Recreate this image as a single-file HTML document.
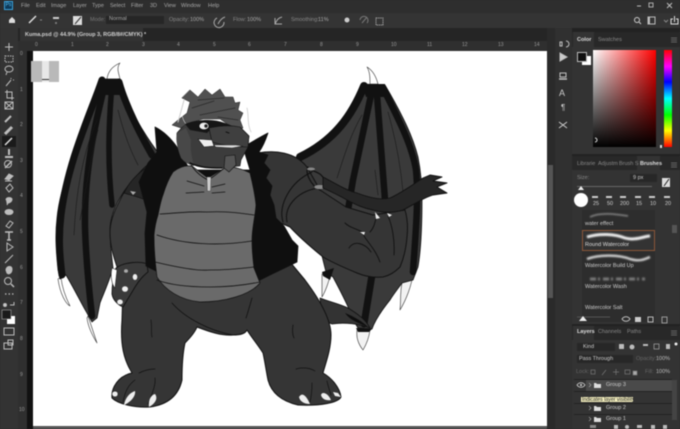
<!DOCTYPE html>
<html><head><meta charset="utf-8"><style>
html,body{margin:0;padding:0;background:#2b2b2b}
#r{position:relative;width:680px;height:429px;overflow:hidden;background:#2f2f2f;font-family:"Liberation Sans",sans-serif;color:#a8a8a8;font-size:5.5px;filter:blur(.4px)}
#r div{position:absolute}
#r span{position:absolute;white-space:nowrap;line-height:7px}
svg{position:absolute;left:0;top:0}
</style></head><body><div id="r">
<div style="left:0;top:0;width:680px;height:13px;background:#2e2e2e"></div>
<div style="left:0;top:13px;width:680px;height:15px;background:#343434"></div>
<div style="left:0;top:28px;width:547px;height:13px;background:#252525"></div>
<div style="left:20px;top:28px;width:123px;height:13px;background:#333"></div>
<div style="left:0;top:28px;width:18px;height:401px;background:#333"></div>
<div style="left:18px;top:41px;width:529px;height:10px;background:#2f2f2f"></div>
<div style="left:18px;top:41px;width:9px;height:388px;background:#2f2f2f"></div>
<div style="left:27px;top:51px;width:6px;height:378px;background:#111"></div>
<div style="left:33px;top:51px;width:514px;height:375px;background:#fff"></div>
<div style="left:33px;top:426px;width:514px;height:3px;background:#555"></div>
<div style="left:547px;top:28px;width:8px;height:401px;background:#2a2a2a"></div>
<div style="left:548px;top:165px;width:5px;height:133px;background:#555"></div>
<div style="left:555px;top:28px;width:17px;height:401px;background:#303030"></div>
<div style="left:572px;top:28px;width:108px;height:401px;background:#222"></div>
<div style="left:572px;top:32px;width:108px;height:122px;background:#333"></div>
<div style="left:572px;top:32px;width:108px;height:15px;background:#282828"></div>
<div style="left:573px;top:32px;width:21px;height:15px;background:#333"></div>
<div style="left:572px;top:156px;width:108px;height:168px;background:#333"></div>
<div style="left:572px;top:156px;width:108px;height:14px;background:#282828"></div>
<div style="left:637px;top:156px;width:23px;height:14px;background:#333"></div>
<div style="left:572px;top:326px;width:108px;height:103px;background:#333"></div>
<div style="left:572px;top:326px;width:108px;height:14px;background:#282828"></div>
<div style="left:573px;top:326px;width:21px;height:14px;background:#333"></div>

<!-- menus -->
<div style="left:4px;top:1px;width:9px;height:9px;background:#0d3a5a;border:1px solid #3aa0d8;box-sizing:border-box;color:#5cc0f0;font-size:5px;line-height:7px;text-align:center">Ps</div>
<span style="left:21px;top:3px">File</span><span style="left:36px;top:3px">Edit</span><span style="left:51px;top:3px">Image</span><span style="left:73px;top:3px">Layer</span><span style="left:92px;top:3px">Type</span><span style="left:110px;top:3px">Select</span><span style="left:131px;top:3px">Filter</span><span style="left:150px;top:3px">3D</span><span style="left:164px;top:3px">View</span><span style="left:181px;top:3px">Window</span><span style="left:208px;top:3px">Help</span>
<span style="left:90px;top:17px;color:#777">Mode:</span>
<div style="left:106px;top:16px;width:58px;height:8px;background:#262626"></div>
<span style="left:109px;top:16px">Normal</span>
<span style="left:169px;top:17px;color:#888">Opacity:</span><span style="left:190px;top:17px">100%</span>
<span style="left:233px;top:17px;color:#888">Flow:</span><span style="left:247px;top:17px">100%</span>
<span style="left:291px;top:17px;color:#888">Smoothing:</span><span style="left:318px;top:17px">11%</span>
<span style="left:25px;top:32px;color:#d0d0d0;font-weight:bold">Kuma.psd @ 44.9% (Group 3, RGB/8#/CMYK) *</span>
<span style="left:35px;top:42px;color:#999;font-size:5px">0</span><span style="left:71px;top:42px;color:#999;font-size:5px">1</span><span style="left:106px;top:42px;color:#999;font-size:5px">2</span><span style="left:142px;top:42px;color:#999;font-size:5px">3</span><span style="left:177px;top:42px;color:#999;font-size:5px">4</span><span style="left:213px;top:42px;color:#999;font-size:5px">5</span><span style="left:248px;top:42px;color:#999;font-size:5px">6</span><span style="left:284px;top:42px;color:#999;font-size:5px">7</span><span style="left:320px;top:42px;color:#999;font-size:5px">8</span><span style="left:356px;top:42px;color:#999;font-size:5px">9</span><span style="left:391px;top:42px;color:#999;font-size:5px">10</span><span style="left:427px;top:42px;color:#999;font-size:5px">11</span><span style="left:462px;top:42px;color:#999;font-size:5px">12</span><span style="left:498px;top:42px;color:#999;font-size:5px">13</span><span style="left:534px;top:42px;color:#999;font-size:5px">14</span>
<span style="left:20px;top:51px;color:#999;font-size:5px">0</span><span style="left:20px;top:87px;color:#999;font-size:5px">1</span><span style="left:20px;top:122px;color:#999;font-size:5px">2</span><span style="left:20px;top:158px;color:#999;font-size:5px">3</span><span style="left:20px;top:193px;color:#999;font-size:5px">4</span><span style="left:20px;top:229px;color:#999;font-size:5px">5</span><span style="left:20px;top:265px;color:#999;font-size:5px">6</span><span style="left:20px;top:300px;color:#999;font-size:5px">7</span><span style="left:20px;top:336px;color:#999;font-size:5px">8</span><span style="left:20px;top:372px;color:#999;font-size:5px">9</span><span style="left:19px;top:407px;color:#999;font-size:5px">10</span>

<!-- color panel -->
<span style="left:577px;top:37px;color:#ddd;font-weight:bold">Color</span><span style="left:598px;top:37px;color:#888">Swatches</span>
<div style="left:593px;top:50px;width:63px;height:97px;background:linear-gradient(to top,#000,rgba(0,0,0,0)),linear-gradient(to right,#fff,#f00)"></div>
<div style="left:664px;top:50px;width:8px;height:97px;background:linear-gradient(to bottom,#f00,#f0f 17%,#00f 33%,#0ff 50%,#0f0 67%,#ff0 83%,#f00)"></div>
<div style="left:582px;top:56px;width:9px;height:9px;background:#fff"></div>
<div style="left:577px;top:52px;width:8px;height:8px;background:#111;border:.5px solid #bbb"></div>

<!-- brushes panel -->
<span style="left:577px;top:161px;color:#888">Librarie</span><span style="left:598px;top:161px;color:#888">Adjustm</span><span style="left:619px;top:161px;color:#888">Brush S</span><span style="left:640px;top:161px;color:#ddd;font-weight:bold">Brushes</span>
<span style="left:577px;top:175px;color:#888">Size:</span>
<div style="left:630px;top:174px;width:27px;height:8px;background:#272727"></div><span style="left:633px;top:175px;color:#ccc">9 px</span>
<div style="left:662px;top:178px;width:8px;height:9px;background:#ddd"></div>
<div style="left:577px;top:186px;width:75px;height:1px;background:#666"></div>
<div style="left:574px;top:193px;width:14px;height:14px;border-radius:50%;background:#fff"></div>
<span style="left:593px;top:201px;color:#ccc">25</span><span style="left:607px;top:201px;color:#ccc">50</span><span style="left:620px;top:201px;color:#ccc">200</span><span style="left:636px;top:201px;color:#ccc">15</span><span style="left:650px;top:201px;color:#ccc">10</span><span style="left:665px;top:201px;color:#ccc">20</span>
<div style="left:582px;top:210px;width:73px;height:112px;background:#2d2d2d"></div>
<div style="left:582px;top:230px;width:73px;height:21px;border:1px solid #8a5638;box-sizing:border-box;background:#333"></div>
<span style="left:585px;top:221px;color:#ccc">water effect</span>
<span style="left:585px;top:242px;color:#ddd">Round Watercolor</span>
<span style="left:585px;top:263px;color:#ccc">Watercolor Build Up</span>
<span style="left:585px;top:284px;color:#ccc">Watercolor Wash</span>
<span style="left:585px;top:305px;color:#ccc">Watercolor Salt</span>
<div style="left:672px;top:225px;width:5px;height:8px;background:#555"></div>

<!-- layers panel -->
<span style="left:577px;top:329px;color:#ddd;font-weight:bold">Layers</span><span style="left:598px;top:329px;color:#888">Channels</span><span style="left:627px;top:329px;color:#888">Paths</span>
<div style="left:577px;top:343px;width:38px;height:8px;background:#272727"></div><span style="left:583px;top:344px;color:#ccc">Kind</span>
<div style="left:577px;top:355px;width:56px;height:8px;background:#272727"></div><span style="left:579px;top:356px;color:#ccc">Pass Through</span>
<span style="left:636px;top:356px;color:#666">Opacity:</span><span style="left:656px;top:356px;color:#bbb">100%</span>
<span style="left:576px;top:369px;color:#666">Lock:</span><span style="left:645px;top:369px;color:#666">Fill:</span><span style="left:656px;top:369px;color:#bbb">100%</span>
<div style="left:574px;top:379px;width:98px;height:1px;background:#222"></div>
<div style="left:586px;top:380px;width:86px;height:11px;background:#4a4a4a"></div>
<div style="left:574px;top:391px;width:98px;height:1px;background:#222"></div>
<div style="left:574px;top:403px;width:98px;height:1px;background:#222"></div>
<div style="left:574px;top:414px;width:98px;height:1px;background:#222"></div>
<span style="left:606px;top:382px;color:#ccc">Group 3</span><span style="left:606px;top:405px;color:#ccc">Group 2</span><span style="left:606px;top:416px;color:#ccc">Group 1</span>
<div style="left:672px;top:380px;width:5px;height:40px;background:#444"></div>

<svg width="680" height="429" viewBox="0 0 680 429">
<defs><filter id="s"><feGaussianBlur stdDeviation=".7"/></filter></defs>
<g stroke-linejoin="round" stroke-linecap="round">
<rect x="31" y="61" width="28" height="21" fill="#b9b9b9"/><rect x="42" y="61" width="7" height="21" fill="#e8e8e8"/><rect x="42" y="79" width="7" height="1" fill="#333"/>
<!-- left wing claws -->
<path d="M107 79C108 71 113 66 120 63C116 68 119 74 120 79" fill="#fff" stroke="#333" stroke-width=".6"/>
<path d="M61 277C62 288 66 298 70 306C66 304 60 294 58 279Z" fill="#fff" stroke="#333" stroke-width=".6"/>
<path d="M88 316L97 343C92 335 88 326 87 318Z" fill="#fff" stroke="#333" stroke-width=".6"/>
<!-- left wing -->
<path d="M102 79L120 79C123 85 122 92 126 100C135 118 148 140 160 155L145 168C125 185 110 210 110 230C110 245 112 258 113 268C108 285 102 297 100 303L97 318L92 322L87 313C82 305 75 290 66 275L60 279L58 270C56 250 55 235 57 218C60 185 80 135 96 105Z" fill="#3a3a3a" stroke="#111" stroke-width=".8"/>
<path d="M102 80C92 110 68 160 61 215C58 240 60 258 62 275" fill="none" stroke="#111" stroke-width="7"/>
<path d="M119 82C124 100 135 125 152 155" fill="none" stroke="#111" stroke-width="7"/>
<path d="M105 84C96 120 84 170 85 227C86 260 89 290 92 316" fill="none" stroke="#111" stroke-width="6.500"/>
<path d="M112 84C109 120 107 160 112 205" fill="none" stroke="#111" stroke-width="5.500"/>
<rect x="101" y="79" width="20" height="16" fill="#111"/>
<g fill="none" stroke="#1a1a1a" stroke-width=".6"><path d="M97 120C84 150 76 190 74 235"/><path d="M118 110C123 130 130 150 138 165"/><path d="M98 130C92 150 86 190 80 220"/></g>
<!-- right wing claws -->
<path d="M367 67C372 70 376 76 378 84L370 84C370 78 370 72 367 67Z" fill="#fff" stroke="#333" stroke-width=".6"/>
<path d="M402 283C404 280 410 277 413 273C412 285 406 300 400 310C401 300 400 292 402 283Z" fill="#f2f2f2" stroke="#333" stroke-width=".6"/>
<path d="M357 330L370 330C369 338 366 345 363 350C359 345 356 338 357 330Z" fill="#f2f2f2" stroke="#333" stroke-width=".6"/>
<path d="M322 274C322 282 322 290 322 297C325 292 329 282 330 275Z" fill="#f2f2f2" stroke="#333" stroke-width=".6"/>
<!-- right wing -->
<path d="M362 84L385 85C392 97 398 108 403 118C410 132 415 145 418 157C421 172 422 185 422 200C422 225 421 250 418 267L413 280L402 283C397 290 393 295 390 300C382 310 375 320 372 329L358 328L355 323C348 305 340 290 333 277L326 272L297 156C320 148 335 135 340 125C348 112 355 98 362 84Z" fill="#3a3a3a" stroke="#111" stroke-width=".8"/>
<path d="M364 86C352 115 335 140 300 157" fill="none" stroke="#111" stroke-width="8"/>
<path d="M383 88C398 118 412 145 416 170C419 200 415 240 413 272" fill="none" stroke="#111" stroke-width="6.500"/>
<path d="M371 95L353 180L347 216" fill="none" stroke="#111" stroke-width="6.500"/>
<path d="M377 95L385 200" fill="none" stroke="#111" stroke-width="6.500"/>
<path d="M372 275L364 324" fill="none" stroke="#111" stroke-width="7"/>
<path d="M362 84H385V97H366Z" fill="#111"/>
<path d="M322 272L334 268L330 280L323 276Z" fill="#111"/>
<path d="M356 328L372 329L369 332L358 332Z" fill="#111"/>
<g fill="none" stroke="#1a1a1a" stroke-width=".6"><path d="M362 115C350 135 343 160 337 178"/><path d="M388 112C396 140 401 170 403 192"/><path d="M375 170L378 195"/></g>
<!-- tail lower -->
<path d="M320 298C330 302 340 304 348 308C358 314 366 320 370 328C360 324 345 322 332 324L322 320Z" fill="#333" stroke="#111" stroke-width=".8"/>
<path d="M345 313C355 317 363 322 368 327C358 323 350 320 345 313Z" fill="#0f0f0f"/>
<!-- body/legs -->
<path d="M150 225C128 260 122 290 122 320C120 345 124 360 132 373C118 376 111 388 112 398C118 404 135 408 150 407C165 405 178 398 182 380C182 365 183 352 185 343C190 338 195 332 197 327C210 332 222 336 233 335C240 335 245 334 247 330C252 338 258 345 263 353C265 362 266 370 268 380C272 395 285 402 298 405C320 406 338 403 341 397C340 388 332 378 323 373C325 365 331 350 331 335C331 320 320 300 305 280L290 262L255 210L160 200Z" fill="#353535" stroke="#111" stroke-width="1"/>
<path d="M151 320C152 327 151 332 152 337" fill="none" stroke="#111" stroke-width=".7"/>
<path d="M293 325C292 332 293 336 294 338" fill="none" stroke="#111" stroke-width=".8"/>
<path d="M172 303C185 318 210 331 233 335M252 298C250 305 248 312 246 318" fill="none" stroke="#111" stroke-width=".8"/>
<path d="M139 373C145 370 150 369 155 369M296 369C303 367 310 368 315 371" fill="none" stroke="#111" stroke-width=".7"/>
<path d="M135 380C128 385 125 392 123 402M155 378C156 386 151 396 148 404M312 383C312 390 311 398 310 402M327 381C328 386 330 392 331 395" fill="none" stroke="#111" stroke-width=".7"/>
<!-- toes -->
<ellipse cx="115" cy="394" rx="3" ry="2.800" fill="#eee" stroke="#111" stroke-width=".4"/><path d="M124 405C125 399 129 393 135 391C136 396 131 402 124 405Z" fill="#eee"/><path d="M149 407C148 400 151 395 155 394C158 398 156 403 149 407Z" fill="#eee"/>
<path d="M299 397C302 392 306 395 310 404C305 404 300 402 299 397Z" fill="#eee"/><path d="M321 395C322 391 328 393 331 400C326 401 322 399 321 395Z" fill="#eee"/><path d="M333 392L338 393L341 397L335 396Z" fill="#eee"/>
<!-- left arm -->
<path d="M160 155C145 165 128 183 120 200C112 215 110 225 110 232C110 245 113 255 117 267L147 267L155 230L160 190Z" fill="#3a3a3a" stroke="#111" stroke-width=".9"/>
<path d="M124 193C130 180 140 172 146 168C150 175 152 190 150 202C143 198 130 195 124 193Z" fill="#262626" stroke="#111" stroke-width=".7"/>
<path d="M130 191L136 192L133 195Z" fill="#aaa"/>
<path d="M116 268C124 262 140 261 147 264L148 272C140 278 135 287 132 292L123 307C118 305 113 300 112 294C112 285 113 278 116 268Z" fill="#3a3a3a" stroke="#111" stroke-width=".9"/>
<path d="M112 268C110 276 112 285 115 288L117 270Z" fill="#fff" stroke="#222" stroke-width=".6"/>
<ellipse cx="135" cy="277" rx="2.300" ry="3" fill="#eee"/><ellipse cx="125" cy="289" rx="3" ry="2.800" fill="#eee"/><ellipse cx="120" cy="302" rx="2.800" ry="2.500" fill="#eee"/><ellipse cx="126" cy="271" rx="2" ry="1.800" fill="#aaa"/>
<!-- right arm -->
<path d="M258 153C275 150 295 152 307 167L320 190L346 207L373 215L405 210C408 220 408 228 407 237C406 250 403 260 400 267C394 273 388 276 383 277C372 278 364 276 357 273C345 268 333 263 323 257C312 248 300 238 290 227L262 215Z" fill="#353535" stroke="#111" stroke-width="1"/>
<!-- vest -->
<path d="M155 127C165 132 172 140 177 147L190 170L250 170L243 147C252 142 260 137 268 133C265 142 262 148 259 152L268 155L264 163L270 170L266 178L272 186L270 195L274 205L276 218L284 226L292 240L298 246L297 262L270 275L252 284L158 272L146 266L145 233L147 212L139 182L148 163L157 152Z" fill="#0f0f0f" stroke="#111" stroke-width=".8"/>
<!-- belly -->
<path d="M173 172C178 168 185 165 192 166L208 178L228 166C238 168 245 170 250 173C253 185 255 195 256 205C255 218 252 228 252 240C252 250 253 260 254 268L260 283C250 295 225 302 200 302C180 300 165 290 157 277C155 262 154 248 154 235C155 225 157 218 158 215C160 205 161 200 163 195C166 185 169 178 173 172Z" fill="#6a6a6a" stroke="#111" stroke-width=".7"/>
<path d="M160 214C180 213 190 211 207 212C225 211 240 213 254 215M157 235C185 245 220 246 252 241M155 262C180 268 200 271 210 270C230 270 245 268 254 267M157 280C170 285 190 287 210 287C225 287 245 285 260 282" fill="none" stroke="#111" stroke-width=".8"/>
<path d="M187 181L204 186M186 193L204 192M212 187L225 184M212 193L225 192" fill="none" stroke="#111" stroke-width=".7"/>
<path d="M190 163C195 172 202 177 208 180C215 176 222 170 228 165" fill="none" stroke="#111" stroke-width=".8"/>
<path d="M207 177L211 177L210.500 191L207.500 191Z" fill="#ccc" stroke="#222" stroke-width=".3"/>
<!-- strap, tail -->
<path d="M283 222C278 205 290 182 312 172" fill="none" stroke="#111" stroke-width="1"/>
<path d="M287 222C284 208 295 192 318 188" fill="none" stroke="#111" stroke-width="1"/>
<path d="M308 167C305 172 310 185 320 190M310 170C318 172 325 175 325 185" fill="none" stroke="#111" stroke-width="1.200"/>
<ellipse cx="311" cy="169" rx="4" ry="1.500" fill="#888"/><ellipse cx="320" cy="187" rx="6" ry="2.400" fill="#888" stroke="#111" stroke-width=".4"/>
<path d="M323 177C335 183 345 190 357 193C370 198 382 200 390 198C403 192 415 183 423 178L430 175L442 177L433 181L447 183L437 187L447 193L433 195C423 198 413 205 403 210C393 213 383 213 373 210C362 208 355 204 347 200C340 196 332 192 323 188Z" fill="#262626" stroke="#111" stroke-width=".9"/>
<path d="M377 215C375 222 374 228 370 232M388 216C392 225 395 240 394 255M345 223C350 228 355 228 362 232C365 240 375 248 380 262M349 248C354 240 365 243 371 252" fill="none" stroke="#111" stroke-width=".9"/>
<path d="M375 212L380 218L376 219ZM387 213L392 215L389 217ZM360 232L365 232L364 235Z" fill="#eee"/>
<!-- head -->
<path d="M190 163C184 160 181 155 180 148C179 142 176 138 177 133L185 124L240 127L249 136L248 147L241 160L240 166L222 168L205 167Z" fill="#3c3c3c" stroke="#111" stroke-width=".6"/>
<path d="M177 133C175 140 178 150 181 158C185 163 190 165 194 166C192 158 190 150 191 140L186 128Z" fill="#484848"/>
<path d="M190 90L198 97L205 89L212 95L220 89L225 97L233 97L235 103L240 102L238 110L243 113L240 120L243 128L236 130L220 119L203 119L186 124L181 128L172 125L178 120L187 113L190 102L182 98Z" fill="#505050" stroke="#222" stroke-width=".5"/>
<path d="M192 108L214 101M200 115L235 108M198 100L224 98M218 117L238 120" fill="none" stroke="#2a2a2a" stroke-width=".8"/>
<path d="M172 116C176 110 182 106 184 99M183 100C181 110 181 118 186 124" fill="none" stroke="#fff" stroke-width=".5"/>
<path d="M178 122C180 115 182 108 184 100" fill="none" stroke="#ccc" stroke-width="1"/>
<path d="M247 108C249 116 247 124 251 132" fill="none" stroke="#ccc" stroke-width=".8"/>
<path d="M185 124C192 121 200 120 208 120C220 120 232 125 240 130L212 128L207 133L190 130Z" fill="#161616"/>
<ellipse cx="204" cy="126" rx="5" ry="3.800" fill="#eee" stroke="#111" stroke-width=".8"/><circle cx="206" cy="126" r="1.700" fill="#222"/>
<path d="M209 128C218 126 230 125 240 127L249 136L248 147C240 147 225 146 212 142Z" fill="#3f3f3f" stroke="#111" stroke-width=".6"/>
<path d="M226 132L229 133" stroke="#111"/>
<path d="M198 139L212 140L214 146L204 147Z" fill="#eee" stroke="#111" stroke-width=".6"/>
<path d="M214 145L236 145L243 146L232 148L216 147Z" fill="#ddd" stroke="#111" stroke-width=".4"/>
<path d="M225 156L235 155L236 165L229 172L224 168Z" fill="#555" stroke="#111" stroke-width=".6"/>
<path d="M190 163C200 168 210 168 222 168" fill="none" stroke="#111" stroke-width="1.500"/>
</g>
<!-- toolbar icons -->
<g fill="none" stroke="#bdbdbd" stroke-width="1">
<path d="M9 43V51M5 47H13"/>
<rect x="5" y="56" width="8" height="6" stroke-dasharray="1.500 1"/>
<ellipse cx="9" cy="69" rx="4" ry="3"/><path d="M7 72L6 75"/>
<path d="M6 86L11 80M11 78V79M13 80H14"/>
<path d="M7 90V98H14M5 92H12V100"/>
<rect x="5" y="102" width="8" height="7"/><path d="M5 102L13 109M13 102L5 109"/>
<path d="M5 122L11 116" stroke-width="2"/>
<path d="M5 134L12 127" stroke-width="3"/>
<rect x="2" y="136" width="14" height="11" fill="#1a1a1a" stroke="none"/>
<path d="M5 145L12 138" stroke-width="1.500" stroke="#ddd"/>
<path d="M9 149V155M5 157H13" stroke-width="2"/>
<path d="M5 168L12 161" stroke-width="1.500"/><circle cx="8" cy="164" r="3.500"/>
<path d="M5 179L9 174L13 176L9 180Z" fill="#bdbdbd"/><path d="M5 181H12"/>
<path d="M6 188L10 184L13 188L9 192Z"/>
<path d="M6 200C6 197 11 197 12 199C12 202 9 203 8 203L7 205" fill="#bdbdbd"/>
<ellipse cx="9" cy="212" rx="4" ry="2.500" fill="#bdbdbd"/>
<path d="M6 226L10 221L13 223L9 228Z"/>
<path d="M5 232H13M9 232V240M7 240H11" stroke-width="1.500"/>
<path d="M7 243L7 251L13 247Z" stroke="#bdbdbd"/>
<path d="M5 263L13 255"/>
<path d="M6 270C6 266 12 265 12 269C12 273 9 275 7 273Z" fill="#bdbdbd"/>
<circle cx="8" cy="281" r="3.500"/><path d="M11 284L14 287" stroke-width="1.500"/>
<path d="M5 294H6.500M8.500 294H10M12 294H13.500" stroke-width="1.200"/>
<path d="M10 305H14V302"/><circle cx="5" cy="305" r="1.500" fill="#ccc"/>
<rect x="4" y="328" width="10" height="7"/>
<rect x="4" y="343" width="8" height="6"/><rect x="8" y="340" width="5" height="5"/>
</g>
<rect x="7" y="316" width="8" height="8" fill="#fff"/>
<rect x="2" y="310" width="9" height="9" fill="#1a1a1a" stroke="#bbb" stroke-width=".5"/>
<!-- option bar icons -->
<path d="M9 20L12 17L15 20V23H9Z" fill="#ddd"/>
<path d="M29 23L36 16" stroke="#ddd" stroke-width="1.500"/>
<path d="M40 20H42" stroke="#888"/>
<rect x="53" y="17" width="6" height="2" fill="#ccc"/><circle cx="56" cy="23" r="1" fill="#888"/>
<rect x="73" y="16" width="9" height="9" fill="#ddd"/><path d="M75 24L81 17" stroke="#333"/>
<path d="M218 24C220 20 222 18 225 17M217 18A5 5 0 1 0 224 22" fill="none" stroke="#aaa"/>
<path d="M275 24C277 20 278 18 282 17M275 18V24H282" fill="none" stroke="#aaa"/>
<circle cx="347" cy="20" r="2.500" fill="#ccc"/>
<path d="M362 23L367 17M360 20A4 4 0 1 1 367 23" fill="none" stroke="#777"/>
<path d="M376 18H383V25H376Z" fill="none" stroke="#999" stroke-dasharray="1.500 .6"/>
<circle cx="637" cy="20" r="2.500" fill="none" stroke="#ccc"/><path d="M639 22L641 24" stroke="#ccc"/>
<rect x="648" y="17" width="7" height="7" fill="none" stroke="#bbb"/><rect x="648" y="17" width="2" height="7" fill="#bbb"/>
<path d="M664 20L666 22L668 20" fill="none" stroke="#888"/>
<path d="M673 19H671V24H678V19H676M674.500 22V16" fill="none" stroke="#ddd"/>
<path d="M637 6H641" stroke="#bbb"/><rect x="649" y="3" width="4" height="4" fill="none" stroke="#aaa"/>
<path d="M667 3L672 8M672 3L667 8" stroke="#bbb"/>
<!-- col icons -->
<g fill="none" stroke="#c0c0c0">
<path d="M560 42H562V46H560ZM566 41A3 3 0 0 1 566 47"/>
<path d="M560 53L567 57L560 61Z" fill="#ccc"/>
<rect x="560" y="73" width="6" height="4"/><path d="M559 79H567" stroke-width="1.500"/>
</g>
<text x="559" y="96" fill="#ccc" font-family="Liberation Sans" font-size="9">A</text>
<text x="561" y="110" fill="#ccc" font-family="Liberation Sans" font-size="8">¶</text>
<path d="M559 122L567 128M559 128L567 122" stroke="#ccc"/>
<!-- panel icons -->
<path d="M671 40H677M671 42H677M671 38H677" stroke="#777" stroke-width=".8"/>
<path d="M671 165H677M671 163H677M671 167H677" stroke="#777" stroke-width=".8"/>
<path d="M671 333H677M671 331H677M671 335H677" stroke="#777" stroke-width=".8"/>
<path d="M581 186L584 190H578Z" fill="#eee"/>
<path d="M664 186L669 179" stroke="#222"/>
<rect x="660" y="145" width="2" height="3" fill="#ddd"/>
<path d="M595 138A2 2 0 0 1 595 142" stroke="#ddd" fill="none"/>
<!-- brush tips -->
<g fill="#ccc"><rect x="592" y="196" width="6" height="2"/><rect x="606" y="196" width="6" height="2"/><rect x="620" y="196" width="6" height="2"/><rect x="635" y="196" width="6" height="2"/><rect x="649" y="196" width="6" height="2"/><rect x="664" y="196" width="6" height="2"/></g>
<g filter="url(#s)" fill="none">
<path d="M590 217C600 212 615 214 628 216" stroke="#888" stroke-width="1.500"/>
<path d="M587 237C600 233 615 234 625 238C635 241 645 236 650 236" stroke="#eee" stroke-width="3"/>
<path d="M587 259C600 254 620 255 630 259C640 262 645 259 650 257" stroke="#ccc" stroke-width="2.500"/>
<path d="M590 279H645" stroke="#777" stroke-width="3" stroke-dasharray="6 2 2 3"/>
</g>
<path d="M577 317H610" stroke="#555"/><path d="M583 316L587 321H579Z" fill="#eee"/>
<path d="M622 319C624 316 628 316 630 319C628 322 624 322 622 319Z" fill="none" stroke="#bbb"/>
<rect x="635" y="317" width="6" height="5" fill="#ccc"/><rect x="648" y="317" width="5" height="5" fill="none" stroke="#bbb"/><rect x="662" y="317" width="5" height="6" fill="none" stroke="#999"/>
<!-- layers icons -->
<g fill="#bbb"><rect x="619" y="344" width="5" height="5" rx=".5"/><circle cx="632" cy="347" r="2.500"/><rect x="643" y="344" width="5" height="2"/><rect x="654" y="344" width="5" height="5" fill="none" stroke="#bbb" stroke-width=".6"/><rect x="666" y="344" width="4" height="5"/><circle cx="676" cy="344" r="1.500" fill="#eee"/></g>
<g fill="none" stroke="#777" stroke-width=".7"><rect x="591" y="370" width="4" height="4"/><path d="M602 375L606 370M613 372H619M616 369V375"/><rect x="625" y="370" width="5" height="4"/><rect x="633" y="371" width="4" height="4" fill="#aaa"/></g>
<path d="M577 385C579 382 583 382 585 385C583 388 579 388 577 385Z" fill="none" stroke="#ddd" stroke-width=".7"/><circle cx="581" cy="385" r="1" fill="#ddd"/>
<g fill="#ddd"><path d="M594 383H596L597 384H601V388H594Z"/><path d="M594 406H596L597 407H601V411H594Z"/><path d="M594 417H596L597 418H601V422H594Z"/></g>
<path d="M589 383L591 385L589 387M589 406L591 408L589 410M589 417L591 419L589 421" fill="none" stroke="#aaa" stroke-width=".6"/>
<g fill="#bbb"><rect x="590" y="425" width="6" height="3" fill="#888"/><rect x="614" y="425" width="4" height="4"/><circle cx="627" cy="427" r="2"/><rect x="637" y="425" width="5" height="3"/><rect x="651" y="425" width="4" height="4"/><rect x="663" y="425" width="4" height="4"/></g>
</svg>
<div style="left:580px;top:396px;width:54px;height:7px;background:#f4efbe;border:.5px solid #333;box-sizing:border-box;color:#222;font-size:5.200px;line-height:6px;padding-left:1px;white-space:nowrap;overflow:hidden">Indicates layer visibility</div>
</div></body></html>
